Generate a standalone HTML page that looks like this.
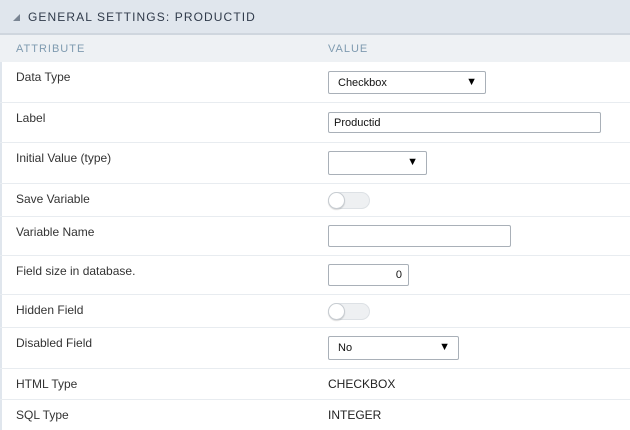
<!DOCTYPE html>
<html><head><style>
*{margin:0;padding:0;box-sizing:border-box}
body{width:630px;height:430px;background:#fff;font-family:"Liberation Sans",sans-serif;position:relative;overflow:hidden;color:#333}
.a{position:absolute}
.hdr{left:0;top:0;width:630px;height:35px;background:#e0e6ed;border-bottom:2px solid #cfd6de}
.hdr span{position:absolute;left:28px;top:10px;font-size:12px;letter-spacing:1.1px;color:#2f3a4a}
.tri{left:13px;top:14px;width:0;height:0;border-left:7px solid transparent;border-bottom:7px solid #7a8593}
.ch{left:0;top:35px;width:630px;height:27px;background:#eef1f4;font-size:11px;color:#7f9bb0;letter-spacing:1px}
.ch span{position:absolute;top:8px}
.lb{left:16px;font-size:12px;color:#333}
.sep{left:0;width:630px;height:1px;background:#e8ecf0}
.lbar{left:0;top:62px;width:2px;height:368px;background:#e0e6ed}
.sel,.inp{border:1px solid #a9b0b8;border-radius:2px;background:#fff;font-size:11px;color:#111}
.sel span{position:absolute;left:9px;top:5px}
.sel i{position:absolute;right:8px;top:4px;font-style:normal;font-size:11px;color:#000}
.tg{width:42px;height:17px;border-radius:9px;background:#eef0f2;border:1px solid #dde1e5}
.tg b{position:absolute;left:-1px;top:-1px;width:17px;height:17px;border-radius:50%;background:#fff;border:1px solid #c8cdd2;box-shadow:0 1px 1px rgba(0,0,0,.15)}
.v{left:328px;font-size:12px;color:#222}
</style></head><body>
<div class="a hdr"><div class="a tri"></div><span>GENERAL SETTINGS: PRODUCTID</span></div>
<div class="a ch"><span style="left:16px">ATTRIBUTE</span><span style="left:328px">VALUE</span></div>
<div class="a lbar"></div>
<div class="a lb" style="top:70px">Data Type</div>
<div class="a sel" style="left:328px;top:71px;width:158px;height:23px"><span>Checkbox</span><i>▼</i></div>
<div class="a sep" style="top:102px"></div>
<div class="a lb" style="top:111px">Label</div>
<div class="a inp" style="left:328px;top:112px;width:273px;height:21px"><span class="a" style="left:5px;top:4px">Productid</span></div>
<div class="a sep" style="top:142px"></div>
<div class="a lb" style="top:151px">Initial Value (type)</div>
<div class="a sel" style="left:328px;top:151px;width:99px;height:24px"><i>▼</i></div>
<div class="a sep" style="top:183px"></div>
<div class="a lb" style="top:192px">Save Variable</div>
<div class="a tg" style="left:328px;top:192px"><b></b></div>
<div class="a sep" style="top:216px"></div>
<div class="a lb" style="top:225px">Variable Name</div>
<div class="a inp" style="left:328px;top:225px;width:183px;height:22px"></div>
<div class="a sep" style="top:255px"></div>
<div class="a lb" style="top:264px">Field size in database.</div>
<div class="a inp" style="left:328px;top:264px;width:81px;height:22px"><span class="a" style="right:6px;top:4px">0</span></div>
<div class="a sep" style="top:294px"></div>
<div class="a lb" style="top:303px">Hidden Field</div>
<div class="a tg" style="left:328px;top:303px"><b></b></div>
<div class="a sep" style="top:327px"></div>
<div class="a lb" style="top:336px">Disabled Field</div>
<div class="a sel" style="left:328px;top:336px;width:131px;height:24px"><span>No</span><i>▼</i></div>
<div class="a sep" style="top:368px"></div>
<div class="a lb" style="top:377px">HTML Type</div>
<div class="a v" style="top:377px">CHECKBOX</div>
<div class="a sep" style="top:399px"></div>
<div class="a lb" style="top:408px">SQL Type</div>
<div class="a v" style="top:408px">INTEGER</div>
</body></html>
